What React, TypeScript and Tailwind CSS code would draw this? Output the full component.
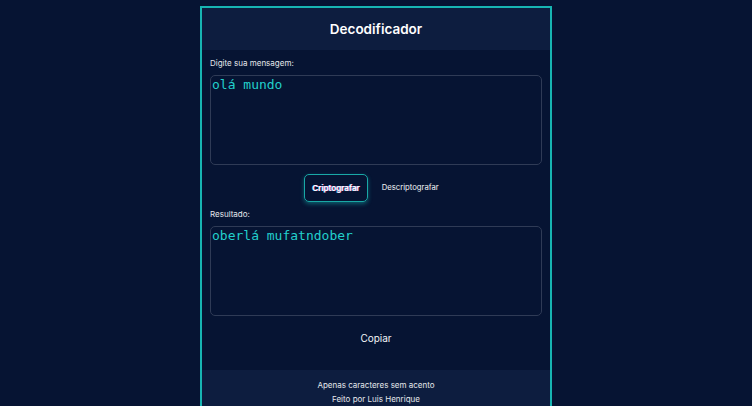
export default function App() {
  return (
    <div className="min-h-screen bg-[#061433] pt-1.5 font-['Inter','Liberation_Sans',sans-serif]">
      <div className="mx-auto w-[352px] border-2 border-[#17b5b3] bg-[#061433]">
        <header className="flex h-[42px] items-center justify-center bg-[#0d1d3f]">
          <h1 className="text-[13.5px] font-semibold text-white">Decodificador</h1>
        </header>

        <main className="px-2 pt-[8px]">
          <label className="block text-[8px] leading-[10px] text-gray-200">Digite sua mensagem:</label>
          <textarea
            defaultValue="olá mundo"
            className="mt-[7px] block h-[90px] w-full resize-none rounded-[5px] border border-[#2f3b56] bg-[#061433] px-px font-['DejaVu_Sans_Mono',monospace] text-[13px] leading-[18px] text-[#22d0cc] outline-none"
          />

          <div className="mt-[9px] flex items-center justify-center gap-3.5 pr-[9px]">
            <button className="h-7 rounded-[5px] border border-[#19a8a6] px-[7px] text-[8px] font-semibold text-white shadow-[0_2px_4px_rgba(23,181,179,0.45)] [text-shadow:0.6px_0_rgba(255,95,215,0.8),-0.6px_0_rgba(63,216,255,0.8)]">
              Criptografar
            </button>
            <button className="h-7 text-[7.7px] text-gray-100">Descriptografar</button>
          </div>

          <label className="mt-[7px] block text-[8px] leading-[10px] text-gray-200">Resultado:</label>
          <textarea
            defaultValue="oberlá mufatndober"
            className="mt-[7px] block h-[90px] w-full resize-none rounded-[5px] border border-[#2f3b56] bg-[#061433] px-px font-['DejaVu_Sans_Mono',monospace] text-[13px] leading-[18px] text-[#22d0cc] outline-none"
          />

          <div className="flex h-[54px] justify-center pt-4">
            <button className="h-3 text-[10px] leading-3 text-gray-100">Copiar</button>
          </div>
        </main>

        <footer className="flex flex-col items-center gap-0.5 bg-[#0d1d3f] pb-3 pt-[9px] text-[8px] leading-3 text-gray-200">
          <p>Apenas caracteres sem acento</p>
          <p>Feito por Luis Henrique</p>
        </footer>
      </div>
    </div>
  )
}
